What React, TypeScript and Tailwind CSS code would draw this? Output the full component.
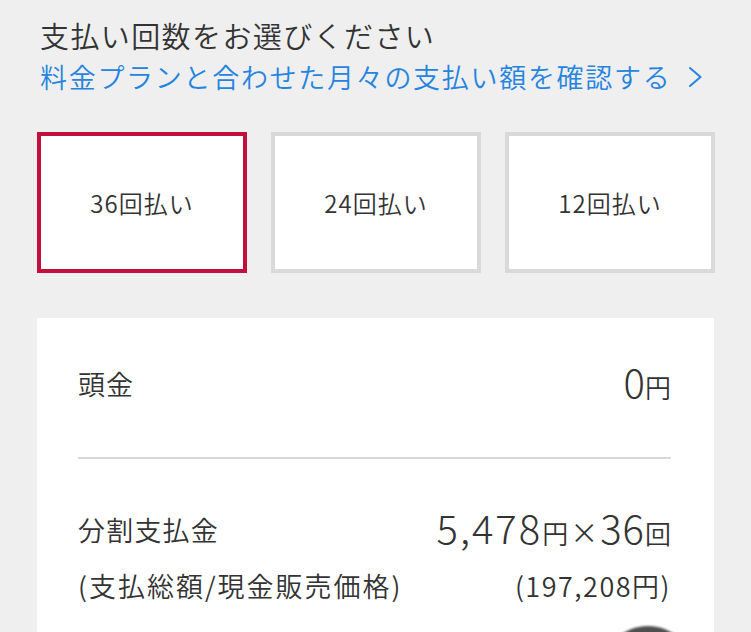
import React from "react";

const font = { fontFamily: '"Noto Sans CJK JP", "Noto Sans", sans-serif' };

export default function App() {
  const options = ["36回払い", "24回払い", "12回払い"];
  return (
    <div
      className="relative w-[751px] h-[632px] overflow-hidden bg-[#efefef] text-[#333] font-[350]"
      style={font}
    >
      <div className="px-[40px] pt-[15px]">
        <div className="text-[29px] leading-[40px] tracking-[1.4px]">支払い回数をお選びください</div>
        <div className="mt-[2px] flex items-center text-[27px] leading-[40px] text-[#2584e0] tracking-[1.7px]">
          <span>料金プランと合わせた月々の支払い額を確認する</span>
          <svg className="ml-[17px]" width="15" height="22" viewBox="0 0 15 22" fill="none">
            <path d="M2 2 L12.5 11 L2 20" stroke="#2584e0" strokeWidth="2" strokeLinecap="round" strokeLinejoin="round" />
          </svg>
        </div>
      </div>

      <div className="mt-[35px] ml-[37px] grid grid-cols-[210px_210px_210px] gap-[24px]">
        {options.map((o, i) => (
          <div
            key={o}
            className={
              "h-[141px] flex items-center justify-center bg-white text-[24px] tracking-[1px] border-[4px] " +
              (i === 0 ? "border-[#c20f3d]" : "border-[#d9d9d9]")
            }
          >
            {o}
          </div>
        ))}
      </div>

      <div className="mt-[45px] ml-[37px] w-[677px] h-[400px] bg-white pl-[41px] pr-[43px]">
        <div className="pt-[46px] pb-[53px] flex items-center justify-between h-[139px]">
          <span className="text-[27px] leading-[40px] tracking-[1px]">頭金</span>
          <span className="flex items-baseline">
            <span className="text-[40px] leading-[40px] font-light">0</span>
            <span className="text-[26px] leading-[40px]">円</span>
          </span>
        </div>
        <div className="h-[2px] bg-[#d8d8d8]" />
        <div className="pt-[48px] flex items-center justify-between">
          <span className="text-[27px] leading-[40px] tracking-[1.2px]">分割支払金</span>
          <span className="flex items-baseline">
            <span className="text-[40px] leading-[40px] font-light tracking-[2px]">5,478</span>
            <span className="text-[26px] leading-[40px]">円</span>
            <span className="text-[28px] leading-[40px] mx-[2px]">×</span>
            <span className="text-[40px] leading-[40px] font-light tracking-[1px]">36</span>
            <span className="text-[26px] leading-[40px]">回</span>
          </span>
        </div>
        <div className="mt-[13px] flex items-center justify-between">
          <span className="text-[27px] leading-[40px] tracking-[2px]">(支払総額/現金販売価格)</span>
          <span className="text-[27px] leading-[40px] tracking-[1.5px]">(197,208円)</span>
        </div>
      </div>

      <div className="absolute left-[600px] top-[626px] w-[96px] h-[96px] rounded-full bg-[#4f4f4f] blur-[1px]" />
    </div>
  );
}
